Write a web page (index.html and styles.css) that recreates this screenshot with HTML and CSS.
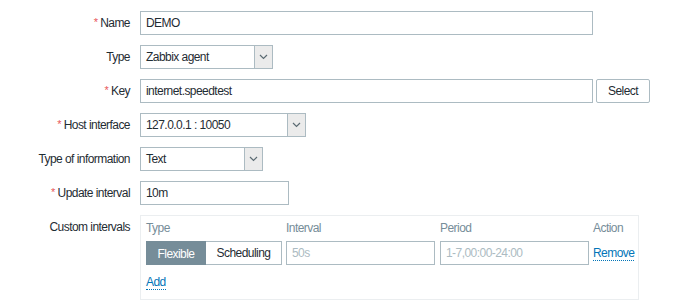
FILE: index.html
```html
<!DOCTYPE html>
<html>
<head>
<meta charset="utf-8">
<link rel="stylesheet" href="styles.css">
</head>
<body>
<form class="form">
  <div class="row">
    <label class="label"><span class="ast">*</span> Name</label>
    <div class="field"><input class="input w-name" type="text" value="DEMO"></div>
  </div>
  <div class="row">
    <label class="label">Type</label>
    <div class="field"><div class="select w-type"><span class="sel-text">Zabbix agent</span><span class="sel-arrow"><svg width="9" height="6" viewBox="0 0 9 6"><path d="M1 1l3.5 3.5L8 1" fill="none" stroke="#5b6b73" stroke-width="1.2"/></svg></span></div></div>
  </div>
  <div class="row">
    <label class="label"><span class="ast">*</span> Key</label>
    <div class="field"><input class="input w-name" type="text" value="internet.speedtest"><button type="button" class="btn">Select</button></div>
  </div>
  <div class="row">
    <label class="label"><span class="ast">*</span> Host interface</label>
    <div class="field"><div class="select w-host"><span class="sel-text">127.0.0.1 : 10050</span><span class="sel-arrow"><svg width="9" height="6" viewBox="0 0 9 6"><path d="M1 1l3.5 3.5L8 1" fill="none" stroke="#5b6b73" stroke-width="1.2"/></svg></span></div></div>
  </div>
  <div class="row">
    <label class="label">Type of information</label>
    <div class="field"><div class="select w-info"><span class="sel-text">Text</span><span class="sel-arrow"><svg width="9" height="6" viewBox="0 0 9 6"><path d="M1 1l3.5 3.5L8 1" fill="none" stroke="#5b6b73" stroke-width="1.2"/></svg></span></div></div>
  </div>
  <div class="row">
    <label class="label"><span class="ast">*</span> Update interval</label>
    <div class="field"><input class="input w-upd" type="text" value="10m"></div>
  </div>
  <div class="row">
    <label class="label">Custom intervals</label>
    <div class="field">
      <div class="box">
        <div class="grid">
          <div class="th">Type</div>
          <div class="th">Interval</div>
          <div class="th">Period</div>
          <div class="th">Action</div>
          <div class="seg"><span class="seg-on">Flexible</span><span class="seg-off">Scheduling</span></div>
          <input class="input small" type="text" placeholder="50s">
          <input class="input small" type="text" placeholder="1-7,00:00-24:00">
          <div class="act"><a class="link">Remove</a></div>
        </div>
        <div class="add"><a class="link">Add</a></div>
      </div>
    </div>
  </div>
</form>
</body>
</html>
```
FILE: styles.css
```css
* { box-sizing: border-box; }
body {
  margin: 0;
  background: #fff;
  font-family: Arial, "Liberation Sans", sans-serif;
  font-size: 12px;
  letter-spacing: -0.55px;
  color: #1f2c33;
}
.form {
  padding-top: 11px;
  display: flex;
  flex-direction: column;
  gap: 10px;
}
.row {
  display: flex;
  gap: 10px;
  align-items: flex-start;
}
.label {
  width: 130px;
  height: 24px;
  text-align: right;
  line-height: 24px;
  white-space: nowrap;
}
.ast {
  color: #e8575a;
  font-size: 11px;
  line-height: 0;
  position: relative;
  top: -1px;
}
.field {
  display: flex;
  gap: 3px;
}
.input {
  height: 24px;
  border: 1px solid #acbbc2;
  background: #fff;
  padding: 0 5px;
  font-family: inherit;
  font-size: 12px;
  letter-spacing: -0.55px;
  color: #1f2c33;
  outline: none;
  margin: 0;
}
.input::placeholder { color: #acbbc2; }
.w-name { width: 453px; }
.w-upd { width: 149px; }
.small { width: 149px; }
.select {
  height: 24px;
  border: 1px solid #acbbc2;
  display: flex;
  background: #fff;
}
.w-type { width: 133px; }
.w-host { width: 166px; }
.w-info { width: 123px; }
.sel-text {
  flex: 1;
  padding-left: 5px;
  line-height: 22px;
  white-space: nowrap;
}
.sel-arrow {
  width: 18px;
  background: #ebebeb;
  border-left: 1px solid #acbbc2;
  display: flex;
  align-items: center;
  justify-content: center;
}
.btn {
  height: 24px;
  width: 54px;
  border: 1px solid #acbbc2;
  border-radius: 2px;
  background: #fff;
  font-family: inherit;
  font-size: 12px;
  letter-spacing: -0.55px;
  color: #1f2c33;
  padding: 0;
  margin-left: 0;
}
.box {
  width: 499px;
  height: 85px;
  border: 1px solid #ebeef0;
  padding: 4px 5px 0 5px;
}
.grid {
  display: grid;
  grid-template-columns: 136px 149px 149px auto;
  column-gap: 4px;
  row-gap: 5px;
}
.grid > :nth-child(4n+3) { margin-left: 1px; }
.grid > :nth-child(4n) { margin-left: 1px; }
.th {
  color: #768d99;
  line-height: 16px;
}
.seg {
  display: flex;
  height: 24px;
}
.seg-on {
  width: 60px;
  background: #768d99;
  color: #fff;
  text-align: center;
  line-height: 24px;
  border: 1px solid #768d99;
}
.seg-off {
  width: 76px;
  border: 1px solid #acbbc2;
  border-left: none;
  text-align: center;
  line-height: 22px;
  color: #1f2c33;
}
.act {
  line-height: 24px;
  margin-left: 1px;
}
.link {
  color: #0275b8;
  border-bottom: 1px dotted #0275b8;
  cursor: pointer;
}
.add {
  margin-top: 9px;
  line-height: 16px;
}
```
